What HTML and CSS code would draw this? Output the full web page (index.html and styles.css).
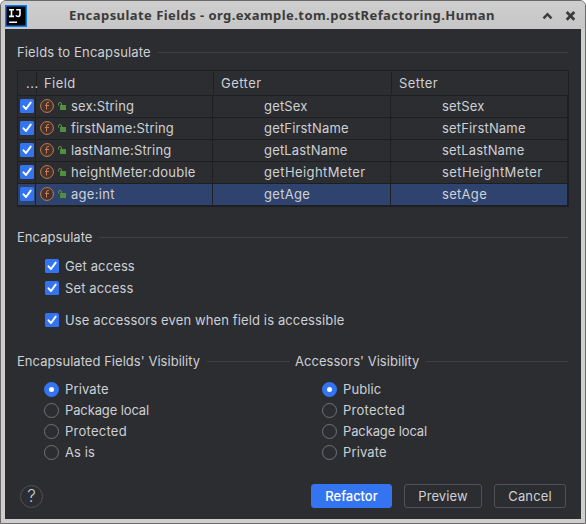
FILE: index.html
```html
<!DOCTYPE html>
<html lang="en">
<head>
<meta charset="utf-8">
<title>Encapsulate Fields</title>
<link rel="stylesheet" href="styles.css">
</head>
<body>
<svg class="defs" width="0" height="0">
  <symbol id="check" viewBox="0 0 14 14"><rect width="14" height="14" rx="1.5" fill="#3574f0"/><path d="M3.5 7.3 6 10 10.7 3.6" fill="none" stroke="#fff" stroke-width="1.9" stroke-linecap="round" stroke-linejoin="round"/></symbol>
  <symbol id="field" viewBox="0 0 14 14"><circle cx="7" cy="7" r="6.4" fill="#45322b" stroke="#c77d55"/><path d="M9 3.5H8Q6.5 3.5 6.5 5V10.5M5 6.5H9" fill="none" stroke="#c77d55" stroke-width="1"/></symbol>
  <symbol id="lock" viewBox="0 0 9 8"><path d="M.5 3.5V2Q.5.5 2 .5T3.5 2V4" fill="none" stroke="#57963f" stroke-width="1"/><rect x="2" y="3" width="6" height="5" fill="#508f40"/></symbol>
</svg>
<div class="window">
  <header class="titlebar">
    <svg class="logo" width="22" height="22" viewBox="0 0 22 22"><rect x=".75" y=".75" width="20.5" height="20.5" fill="#000" stroke="#087cfa" stroke-width="1.5"/><path d="M4 4.7H9M6.5 4.7V11.4M4 11.4H9M11.2 4.7H15V9.3Q15 11.5 13 11.5 11.6 11.5 10.8 10.4M4.2 17.2H12" fill="none" stroke="#fff" stroke-width="1.6"/></svg>
    <h1>Encapsulate Fields - org.example.tom.postRefactoring.Human</h1>
    <svg class="controls" width="34" height="12" viewBox="0 0 34 12"><path d="M1.5 8.3 5.5 4.2 9.5 8.3" fill="none" stroke="#3b3b3b" stroke-width="2.5"/><path d="M24.7 2 32.3 9.8M32.3 2 24.7 9.8" stroke="#3b3b3b" stroke-width="2.7"/></svg>
  </header>
  <main>
    <h2 class="fields-title">Fields to Encapsulate</h2>
    <div class="table">
      <div class="head"><span>...</span><span>Field</span><span>Getter</span><span>Setter</span></div>
      <div class="row"><span><svg class="tick"><use href="#check"/></svg></span><span><svg class="ficon"><use href="#field"/></svg><svg class="lock"><use href="#lock"/></svg>sex:String</span><span>getSex</span><span>setSex</span></div>
      <div class="row"><span><svg class="tick"><use href="#check"/></svg></span><span><svg class="ficon"><use href="#field"/></svg><svg class="lock"><use href="#lock"/></svg>firstName:String</span><span>getFirstName</span><span>setFirstName</span></div>
      <div class="row"><span><svg class="tick"><use href="#check"/></svg></span><span><svg class="ficon"><use href="#field"/></svg><svg class="lock"><use href="#lock"/></svg>lastName:String</span><span>getLastName</span><span>setLastName</span></div>
      <div class="row wide"><span><svg class="tick"><use href="#check"/></svg></span><span><svg class="ficon"><use href="#field"/></svg><svg class="lock"><use href="#lock"/></svg>heightMeter:double</span><span>getHeightMeter</span><span>setHeightMeter</span></div>
      <div class="row selected"><span><svg class="tick"><use href="#check"/></svg></span><span><svg class="ficon"><use href="#field"/></svg><svg class="lock"><use href="#lock"/></svg>age:int</span><span>getAge</span><span>setAge</span></div>
    </div>
    <h2 class="enc-title">Encapsulate</h2>
    <div class="checks">
      <label><svg class="tick"><use href="#check"/></svg>Get access</label>
      <label><svg class="tick"><use href="#check"/></svg>Set access</label>
      <label class="apart"><svg class="tick"><use href="#check"/></svg>Use accessors even when field is accessible</label>
    </div>
    <div class="groups">
      <section>
        <h2>Encapsulated Fields' Visibility</h2>
        <label><i class="radio on"></i>Private</label>
        <label class="tight"><i class="radio"></i>Package local</label>
        <label class="loose"><i class="radio"></i>Protected</label>
        <label><i class="radio"></i>As is</label>
      </section>
      <section>
        <h2>Accessors' Visibility</h2>
        <label><i class="radio on"></i>Public</label>
        <label class="loose"><i class="radio"></i>Protected</label>
        <label class="tight"><i class="radio"></i>Package local</label>
        <label><i class="radio"></i>Private</label>
      </section>
    </div>
    <footer>
      <span class="help">?</span>
      <button class="primary">Refactor</button>
      <button class="preview">Preview</button>
      <button class="cancel">Cancel</button>
    </footer>
  </main>
</div>
</body>
</html>
```

FILE: styles.css
```css
* { box-sizing: border-box; }
body { margin: 0; background: #fff; font: 13px/20px Inter, sans-serif; letter-spacing: .12px; color: #ced0d6; }
svg { display: block; flex: none; }
.defs { position: absolute; }
.window { width: 586px; height: 524px; border: 1px solid #6b6969; border-radius: 6px 6px 0 0; background: #d0cdcd; padding: 0 4px 4px; overflow: hidden; }
.titlebar { height: 28px; margin: 0 -4px; padding: 0 9px 0 4px; display: flex; align-items: center; background: linear-gradient(#cecece, #c6c6c6); }
.logo { margin-top: 1px; }
.controls { margin-top: 1px; }
h1 { flex: 1; margin: 0 0 0 42px; font: bold 13px/20px "Noto Sans", sans-serif; letter-spacing: .44px; color: #3b3b3b; white-space: nowrap; }
main { height: 490px; background: #2b2d30; padding: 0 13px 0 12px; overflow: hidden; }
h2 { margin: 0; height: 20px; font-size: 13px; font-weight: 400; letter-spacing: .04px; display: flex; align-items: center; gap: 7px; white-space: nowrap; }
h2::after { content: ""; flex: 1; height: 1px; background: #3e4043; }
.fields-title { margin: 13px 0 8px; letter-spacing: .15px; }
.table { width: 552px; height: 137px; border: 1px solid #1e1f22; letter-spacing: .17px; }
.head, .row { display: grid; white-space: nowrap; }
.head { height: 25px; padding-top: 1px; grid-template-columns: 19px 177px 178px 1fr; line-height: 23px; letter-spacing: .45px; border-bottom: 1px solid #1e1f22; }
.head span { height: 22px; border-right: 1px solid #1e1f22; padding-left: 7px; }
.head span:first-child { padding-left: 8px; }
.head span:last-child { border: 0; }
.row { height: 22px; grid-template-columns: 18px 177px 178px 1fr; line-height: 20px; }
.wide { letter-spacing: .4px; }
.wide span:nth-child(2) { letter-spacing: .25px; }
.row span { display: flex; align-items: center; padding-bottom: 1px; border-right: 1px solid #1e1f22; border-bottom: 1px solid #1e1f22; }
.row span:nth-child(n+3) { padding-left: 51px; }
.row span:first-child { padding-left: 2px; }
.row span:nth-child(2) { padding-left: 4px; }
.selected { background: #2e436e; letter-spacing: .3px; }
.tick, .ficon { width: 14px; height: 14px; }
.lock { width: 9px; height: 8px; margin: 0 4px; }
.enc-title { margin-top: 20px; }
.checks { padding: 8px 0 0 28px; }
label { display: flex; align-items: center; height: 22px; gap: 6px; }
.apart { margin-top: 10px; }
.groups { display: grid; grid-template-columns: 273px 273px; column-gap: 5px; margin-top: 20px; }
section h2 { margin-bottom: 8px; }
section label { height: 20px; margin-bottom: 1px; padding-left: 27px; }
.tight { letter-spacing: -.12px; }
.loose { letter-spacing: .26px; }
.radio { width: 15px; height: 15px; margin-top: 1px; border: 1px solid #6f737a; border-radius: 50%; }
.radio.on { border: 5px solid #3574f0; background: #fff; }
footer { display: flex; margin-top: 21px; align-items: center; padding: 0 2px 0 3px; }
.help { width: 23px; height: 23px; margin-right: auto; border: 1px solid #4e5157; border-radius: 50%; text-align: center; font-size: 17px; font-weight: 300; line-height: 21px; letter-spacing: 0; }
button { height: 24px; padding: 0; border: 1px solid #4e5157; border-radius: 3px; background: transparent; font: inherit; letter-spacing: inherit; color: inherit; }
.primary { width: 81px; background: #3574f0; border-color: #3574f0; color: #fff; font-weight: 500; letter-spacing: -.05px; }
.preview { width: 78px; margin: 0 12px; }
.cancel { width: 72px; }
```
